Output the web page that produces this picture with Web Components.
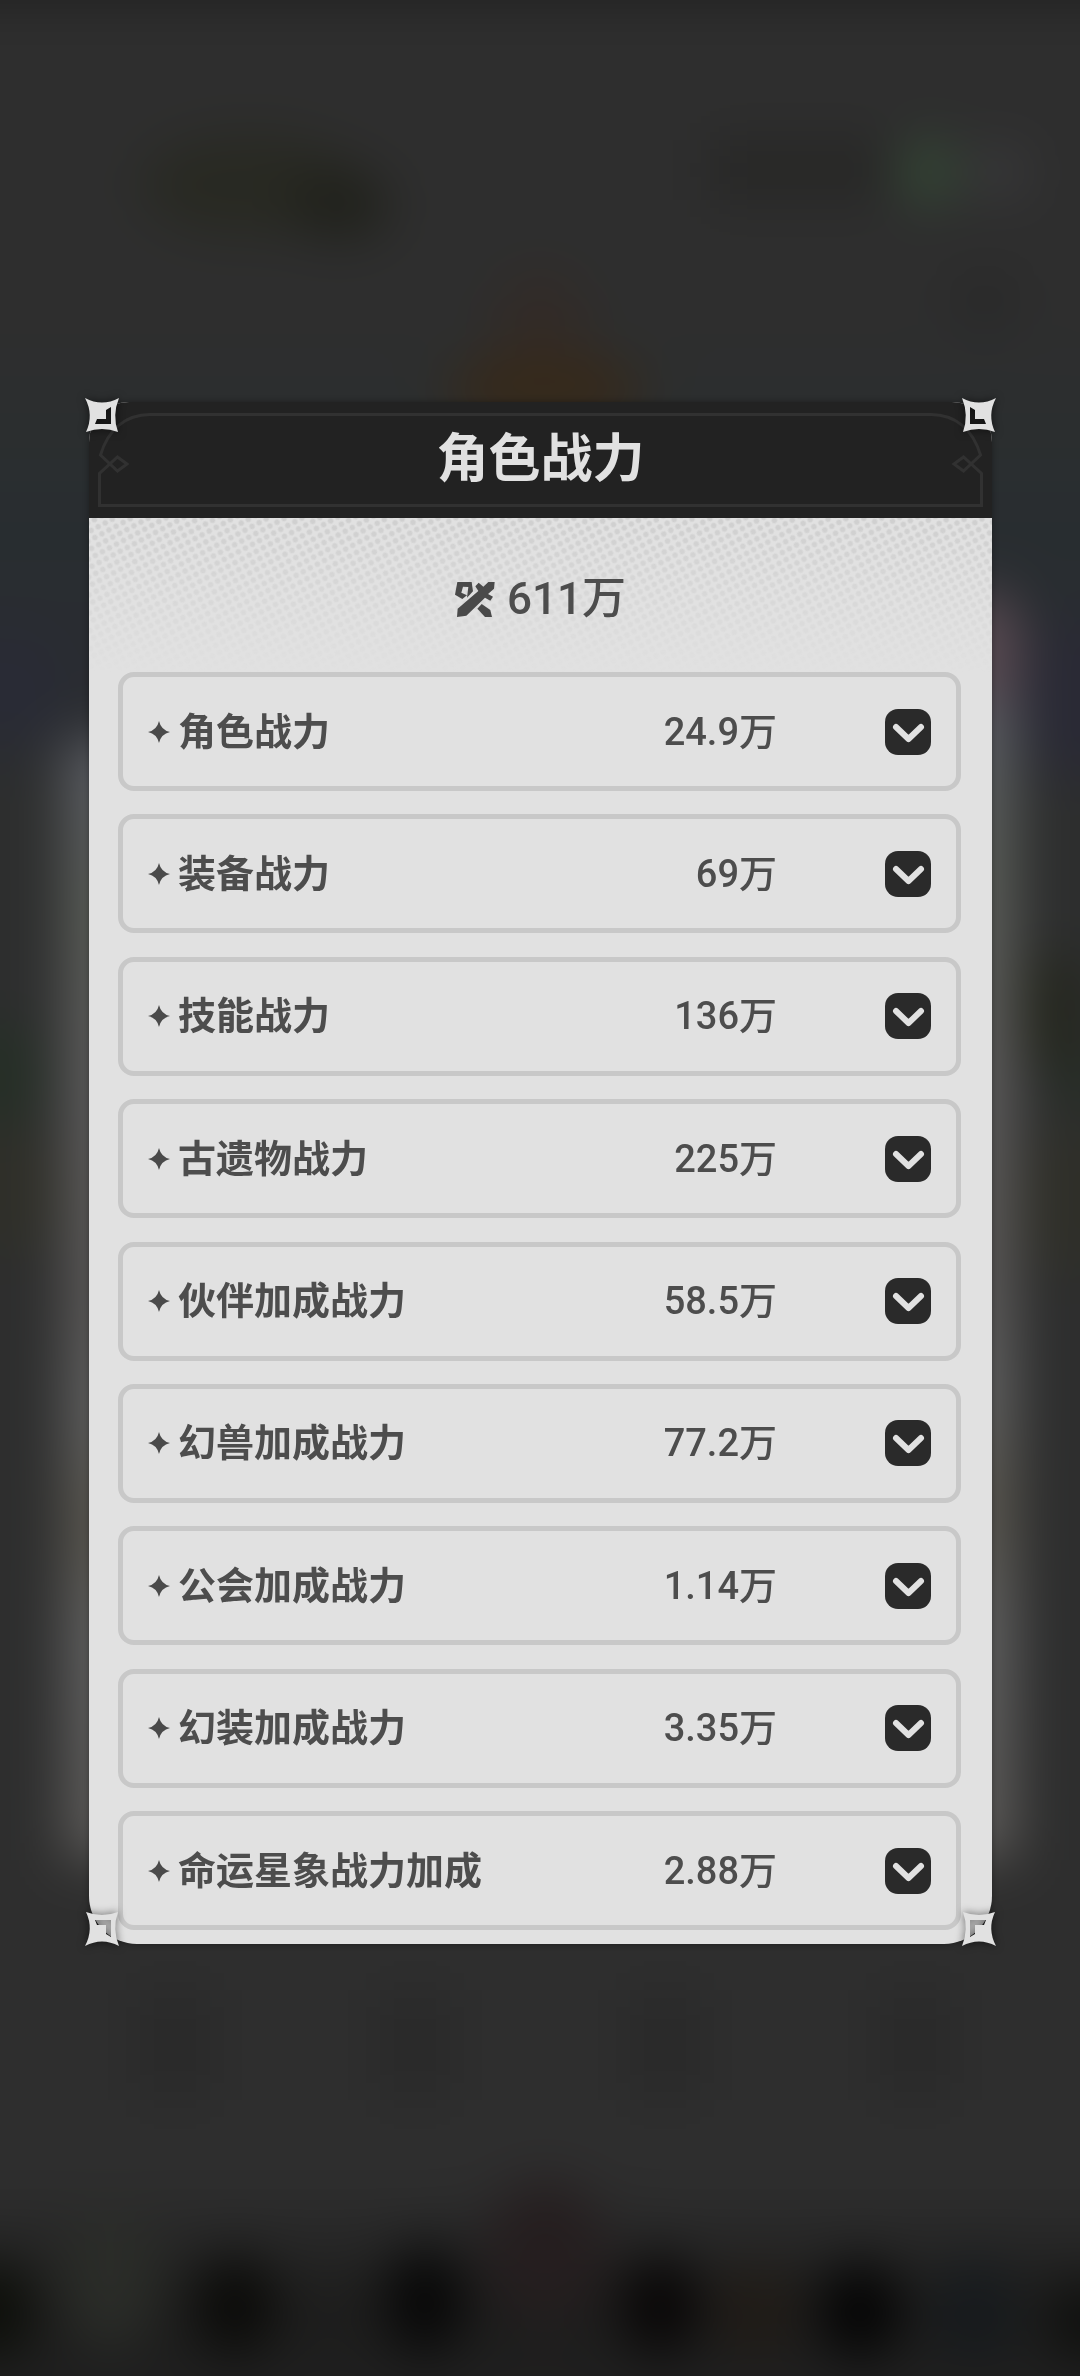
<!DOCTYPE html>
<html lang="zh-CN">
<head>
<meta charset="utf-8">
<meta name="viewport" content="width=device-width, initial-scale=1">
<title>角色战力</title>
<style>
body {
  margin: 0;
  background: #2e2e2e;
  color: #4d4d4d;
  font-family: Roboto, "Noto Sans CJK SC", sans-serif;
}
</style>
</head>
<body>
<power-page>
  <power-dialog>
    <span slot="title">角色战力</span>
    <power-total slot="total">611万</power-total>
    <power-row>角色战力<span slot="value">24.9万</span></power-row>
    <power-row>装备战力<span slot="value">69万</span></power-row>
    <power-row>技能战力<span slot="value">136万</span></power-row>
    <power-row>古遗物战力<span slot="value">225万</span></power-row>
    <power-row>伙伴加成战力<span slot="value">58.5万</span></power-row>
    <power-row>幻兽加成战力<span slot="value">77.2万</span></power-row>
    <power-row>公会加成战力<span slot="value">1.14万</span></power-row>
    <power-row>幻装加成战力<span slot="value">3.35万</span></power-row>
    <power-row>命运星象战力加成<span slot="value">2.88万</span></power-row>
  </power-dialog>
</power-page>

<script>
// every element clones its markup from a template built here
function define(name, html, setup) {
  const template = document.createElement('template');
  template.innerHTML = html;

  window.customElements.define(name, class extends HTMLElement {
    constructor() {
      super();
      this.attachShadow({mode: 'open'});
      this.shadowRoot.appendChild(template.content.cloneNode(true));
    }

    connectedCallback() {
      if (setup) setup(this);
    }
  });
}

define('power-page', `
<style>
:host {
  display: flex;
  flex-direction: column;
  box-sizing: border-box;
  min-height: 100vh;
  padding: 402px 88px 432px 89px;
}
blurred-scene {
  position: fixed;
  inset: 0;
  z-index: -1;
}
</style>
<blurred-scene></blurred-scene>
<slot></slot>
`);

// the game screen behind the dialog, out of focus and dimmed
define('blurred-scene', `
<style>
:host {
  display: block;
}
svg {
  display: block;
  width: 100%;
  height: 100%;
}
</style>
<svg viewBox="0 0 1080 2376" preserveAspectRatio="none" aria-hidden="true">
  <defs>
    <filter id="soft" filterUnits="userSpaceOnUse" x="-150" y="-150" width="1380" height="2676" color-interpolation-filters="sRGB">
      <feGaussianBlur stdDeviation="26"/>
    </filter>
    <linearGradient id="side" x1="0" y1="0" x2="0" y2="1">
      <stop offset="0" stop-color="#5a5c64"/>
      <stop offset=".15" stop-color="#5a5d58"/>
      <stop offset=".3" stop-color="#5d5c5c"/>
      <stop offset=".5" stop-color="#5a5857"/>
      <stop offset=".6" stop-color="#606060"/>
      <stop offset=".7" stop-color="#59564e"/>
      <stop offset=".8" stop-color="#606060"/>
      <stop offset="1" stop-color="#5a5856"/>
    </linearGradient>
    <linearGradient id="base" x1="0" y1="0" x2="0" y2="1">
      <stop offset="0" stop-color="#2e2e2e"/>
      <stop offset=".13" stop-color="#2e2e2e"/>
      <stop offset=".18" stop-color="#2b2e2f"/>
      <stop offset=".22" stop-color="#282d30"/>
      <stop offset=".27" stop-color="#292c31"/>
      <stop offset=".34" stop-color="#2d2e2e"/>
      <stop offset=".92" stop-color="#2e2e2e"/>
      <stop offset=".95" stop-color="#242424"/>
      <stop offset=".97" stop-color="#1c1c1b"/>
      <stop offset="1" stop-color="#1f1f1f"/>
    </linearGradient>
  </defs>
  <g filter="url(#soft)">
    <rect x="-150" y="-150" width="1380" height="2676" fill="#1f1f1f"/>
    <rect x="-150" y="0" width="1380" height="2376" fill="url(#base)"/>
    <ellipse cx="0" cy="690" rx="70" ry="60" fill="#292b35"/>
    <ellipse cx="1080" cy="700" rx="60" ry="80" fill="#2a2a35"/>
    <ellipse cx="0" cy="1080" rx="40" ry="60" fill="#252f26"/>
    <ellipse cx="10" cy="1190" rx="50" ry="70" fill="#2f2f29"/>
    <ellipse cx="1050" cy="1010" rx="40" ry="60" fill="#25271f"/>
    <ellipse cx="1080" cy="1080" rx="20" ry="30" fill="#232d23"/>
    <ellipse cx="1070" cy="1200" rx="50" ry="80" fill="#2f2f29"/>
    <ellipse cx="250" cy="185" rx="110" ry="50" fill="#282922"/>
    <ellipse cx="340" cy="205" rx="50" ry="34" fill="#20211b"/>
    <rect x="710" y="140" width="180" height="60" fill="#272726"/>
    <ellipse cx="928" cy="172" rx="30" ry="32" fill="#344835"/>
    <ellipse cx="1000" cy="172" rx="24" ry="24" fill="#3c3c3e"/>
    <ellipse cx="985" cy="300" rx="35" ry="30" fill="#292929"/>
    <ellipse cx="540" cy="330" rx="50" ry="60" fill="#322b27"/>
    <ellipse cx="545" cy="390" rx="100" ry="36" fill="#36291a"/>
    <rect x="64" y="740" width="476" height="1120" fill="url(#side)"/>
    <rect x="540" y="690" width="476" height="1170" fill="url(#side)"/>
    <ellipse cx="985" cy="650" rx="35" ry="60" fill="#5c4c54"/>
    <rect x="140" y="1990" width="70" height="110" fill="#292929"/>
    <rect x="380" y="1990" width="70" height="110" fill="#292929"/>
    <rect x="630" y="1990" width="70" height="110" fill="#292929"/>
    <rect x="880" y="1990" width="70" height="110" fill="#292929"/>
    <ellipse cx="110" cy="2280" rx="50" ry="70" fill="#2a2c28"/>
    <ellipse cx="-10" cy="2310" rx="40" ry="50" fill="#0c0e09"/>
    <ellipse cx="235" cy="2305" rx="38" ry="50" fill="#0a0a08"/>
    <ellipse cx="425" cy="2300" rx="38" ry="54" fill="#070707"/>
    <ellipse cx="545" cy="2250" rx="60" ry="70" fill="#251e1f"/>
    <ellipse cx="660" cy="2305" rx="38" ry="50" fill="#080606"/>
    <ellipse cx="755" cy="2310" rx="40" ry="44" fill="#201b16"/>
    <ellipse cx="860" cy="2310" rx="40" ry="48" fill="#040404"/>
    <ellipse cx="975" cy="2310" rx="40" ry="50" fill="#161a1d"/>
    <ellipse cx="1085" cy="2320" rx="30" ry="40" fill="#0c0d0b"/>
  </g>
</svg>
`);

define('power-dialog', `
<style>
:host {
  display: flex;
  flex: 1;
}
section {
  position: relative;
  display: flex;
  flex: 1;
  flex-direction: column;
  border-radius: 40px 40px 48px 48px;
  background: #e1e1e1;
  box-shadow: 0 0 6px rgba(0, 0, 0, .35);
}
header {
  display: flex;
  border-radius: 40px 40px 0 0;
  background: #222;
}
header svg {
  flex: none;
  width: 61px;
  height: 116px;
  fill: none;
  stroke: #313131;
  stroke-width: 3;
}
.flip {
  transform: scaleX(-1);
}
h1 {
  flex: 1;
  margin: 11px 0;
  border: solid #313131;
  border-width: 3px 0;
  color: #e1e1e1;
  font-size: 52px;
  font-weight: 700;
  line-height: 88px;
  text-align: center;
}
.list {
  display: flex;
  flex: 1;
  flex-direction: column;
  justify-content: space-between;
  padding: 0 31px 14px 29px;
}
corner-star {
  position: absolute;
}
.tl { top: -4px; left: -4px; }
.tr { top: -4px; right: -4px; transform: scaleX(-1); }
.bl { bottom: -2px; left: -4px; transform: scaleY(-1); }
.br { bottom: -2px; right: -4px; transform: scale(-1); }
</style>
<section role="dialog" aria-labelledby="title">
  <header>
    <svg viewBox="0 0 61 116" aria-hidden="true"><path d="M61 12.500C36 12.500 19 28 11.500 53L28.500 69L38 62L28.500 55L10.500 71.500V103.500H61"/></svg>
    <h1 id="title"><slot name="title"></slot></h1>
    <svg class="flip" viewBox="0 0 61 116" aria-hidden="true"><path d="M61 12.500C36 12.500 19 28 11.500 53L28.500 69L38 62L28.500 55L10.500 71.500V103.500H61"/></svg>
  </header>
  <slot name="total"></slot>
  <div class="list" role="list"><slot></slot></div>
  <corner-star class="tl"></corner-star>
  <corner-star class="tr"></corner-star>
  <corner-star class="bl"></corner-star>
  <corner-star class="br"></corner-star>
</section>
`);

define('corner-star', `
<style>
:host {
  display: block;
  width: 34px;
  height: 34px;
}
svg {
  display: block;
  overflow: visible;
  filter: drop-shadow(0 0 4px rgba(0, 0, 0, .6));
}
</style>
<svg width="34" height="34" viewBox="0 0 34 34" aria-hidden="true">
  <path fill="#e1e1e1" fill-rule="evenodd" d="M0 0Q17 9 34 0Q27 17 33 34Q17 28 1 34Q9 17 0 0ZM21 12V21H12L10 26H26V9Z"/>
</svg>
`);

define('power-total', `
<style>
:host {
  display: grid;
  height: 154px;
}
.dots, .sum {
  grid-area: 1 / 1;
}
.dots {
  width: 100%;
  height: 154px;
  -webkit-mask-image: linear-gradient(#000, rgba(0, 0, 0, .6) 40%, transparent);
  mask-image: linear-gradient(#000, rgba(0, 0, 0, .6) 40%, transparent);
}
.sum {
  z-index: 1;
  display: flex;
  align-items: center;
  justify-content: center;
  gap: 12px;
  padding-top: 8px;
  font-size: 44px;
  font-weight: 500;
  line-height: 60px;
}
.icon {
  width: 40px;
  height: 35px;
  fill: #4a4a4a;
}
</style>
<svg class="dots" aria-hidden="true">
  <defs>
    <pattern id="halftone" width="8" height="8" patternUnits="userSpaceOnUse" patternTransform="rotate(-28)">
      <circle cx="4" cy="4" r="2.700" fill="#cfcfcf"/>
    </pattern>
  </defs>
  <rect width="100%" height="100%" fill="url(#halftone)"/>
</svg>
<div class="sum">
  <svg class="icon" viewBox="0 0 120 105" aria-hidden="true">
    <path d="M7 0H50L54 28L36 47L40 15L24 14L19 32L36 40L22 51L0 38Z"/>
    <path d="M6 105L8 80L70 27L61 13L71 2L85 14L100 0H119L117 20L99 36L114 44L106 56L90 47L34 101Z"/>
    <path d="M67 80L80 66L106 84L111 105H90Z"/>
  </svg>
  <span><slot></slot></span>
</div>
`);

define('power-row', `
<style>
:host {
  display: flex;
  align-items: center;
  box-sizing: border-box;
  min-height: 119px;
  padding: 0 25px;
  border: 5px solid #c8c8c8;
  border-radius: 16px;
  font-size: 38px;
  line-height: 56px;
}
.star {
  flex: none;
  width: 22px;
  height: 22px;
  margin-right: 8px;
  fill: #4a4a4a;
}
.name {
  flex: 1;
  font-weight: 700;
}
.value {
  font-weight: 500;
}
button {
  flex: none;
  width: 46px;
  height: 46px;
  margin-left: 108px;
  padding: 0;
  border: 0;
  border-radius: 13px;
  background: #2a2a2a;
  cursor: pointer;
}
button svg {
  display: block;
}
</style>
<svg class="star" viewBox="0 0 22 22" aria-hidden="true"><path d="M11 0Q13 9 22 11Q13 13 11 22Q9 13 0 11Q9 9 11 0Z"/></svg>
<span class="name"><slot></slot></span>
<span class="value"><slot name="value"></slot></span>
<button type="button" aria-expanded="false">
  <svg width="46" height="46" viewBox="0 0 46 46" fill="none" stroke="#e1e1e1" stroke-width="6" stroke-linecap="round" stroke-linejoin="round" aria-hidden="true"><path d="M11 18L23.500 30L36 18"/></svg>
</button>
`, (row) => {
  const button = row.shadowRoot.querySelector('button');
  row.setAttribute('role', 'listitem');
  button.setAttribute('aria-label', row.firstChild.textContent);
  button.onclick = () => {
    const open = button.getAttribute('aria-expanded') === 'true';
    button.setAttribute('aria-expanded', String(!open));
  };
});
</script>
</body>
</html>
